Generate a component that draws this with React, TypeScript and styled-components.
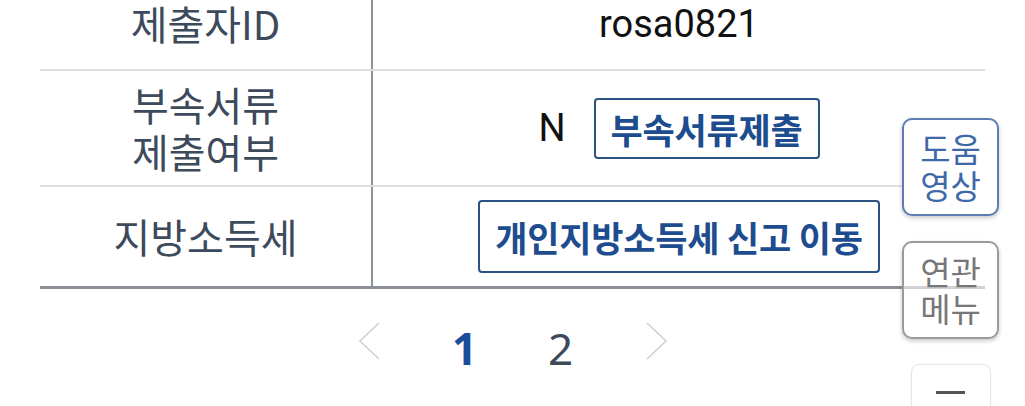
import React from "react";
import styled, { createGlobalStyle } from "styled-components";

const Global = createGlobalStyle`
  html, body { margin: 0; padding: 0; background: #ffffff; }
  body { overflow: hidden; font-family: "Noto Sans CJK KR", "Noto Sans", sans-serif; }
  *, *::before, *::after { box-sizing: border-box; }
`;

const Page = styled.div`
  position: relative;
  width: 1025px;
  height: 406px;
  overflow: hidden;
  background: #fff;
`;

const Table = styled.div`
  margin: -22px 40px 0 40px;
  border-bottom: 3px solid #8a8f96;
`;

const Row = styled.div<{ $h: number; $last?: boolean }>`
  display: grid;
  grid-template-columns: 331px 1fr;
  height: ${(p) => p.$h}px;
  border-bottom: ${(p) => (p.$last ? "none" : "2px solid #dedede")};
`;

const Label = styled.div`
  display: flex;
  align-items: center;
  justify-content: center;
  text-align: center;
  font-family: "Noto Sans CJK KR", "Noto Sans", sans-serif;
  font-size: 40px;
  line-height: 47px;
  color: #3d4a5c;
`;

const Value = styled.div`
  display: flex;
  align-items: center;
  justify-content: center;
  gap: 28px;
  border-left: 2px solid #8e9298;
  font-family: Roboto, "Noto Sans", sans-serif;
  font-size: 38px;
  color: #111;
`;

const OutlineButton = styled.button<{ $h: number }>`
  height: ${(p) => p.$h}px;
  padding: 0 15px;
  border: 2px solid #2b5283;
  border-radius: 4px;
  background: #fff;
  color: #1d4c8f;
  font-family: "Noto Sans CJK KR", "Noto Sans", sans-serif;
  font-weight: 700;
  font-size: 35px;
  letter-spacing: -0.2px;
  white-space: nowrap;
  cursor: pointer;
`;

const Pager = styled.div`
  height: 117px;
  display: flex;
  align-items: center;
  justify-content: center;
`;

const PageItem = styled.div<{ $active?: boolean }>`
  width: 96px;
  display: flex;
  justify-content: center;
  align-items: center;
  font-family: "Noto Sans", Roboto, sans-serif;
  font-size: 44px;
  font-weight: ${(p) => (p.$active ? 700 : 400)};
  color: ${(p) => (p.$active ? "#1a4c9a" : "#3d4a5c")};
`;

const Chevron = styled.svg`
  margin-top: -14px;
`;

const FloatStack = styled.div`
  position: absolute;
  top: 118px;
  right: 26px;
  display: flex;
  flex-direction: column;
  align-items: center;
  gap: 25px;
`;

const FloatButton = styled.div<{ $tone: "blue" | "gray" }>`
  width: 97px;
  height: 98px;
  border-radius: 10px;
  border: 2px solid ${(p) => (p.$tone === "blue" ? "#5b7db4" : "#9a9a9a")};
  background: ${(p) => (p.$tone === "blue" ? "#fff" : "rgba(255,255,255,0.6)")};
  box-shadow: 0 2px 4px rgba(0, 0, 0, 0.22);
  color: ${(p) => (p.$tone === "blue" ? "#3f68a8" : "#777")};
  font-family: "Noto Sans CJK KR", "Noto Sans", sans-serif;
  font-size: 33px;
  line-height: 37px;
  display: flex;
  align-items: center;
  justify-content: center;
  text-align: center;
`;

const TopButton = styled.div`
  width: 80px;
  height: 60px;
  border: 1px solid #e6e6e6;
  border-radius: 8px;
  background: #fff;
  box-shadow: 0 1px 3px rgba(0, 0, 0, 0.06);
  display: flex;
  flex-direction: column;
  align-items: center;
  padding-top: 26px;
`;

const TopBar = styled.div`
  width: 29px;
  height: 3px;
  background: #555;
`;

export default function App() {
  return (
    <Page>
      <Global />
      <Table>
        <Row $h={93}>
          <Label>제출자ID</Label>
          <Value>rosa0821</Value>
        </Row>
        <Row $h={116}>
          <Label>
            부속서류
            <br />
            제출여부
          </Label>
          <Value>
            <span>N</span>
            <OutlineButton $h={61}>부속서류제출</OutlineButton>
          </Value>
        </Row>
        <Row $h={99} $last>
          <Label>지방소득세</Label>
          <Value>
            <OutlineButton $h={73}>개인지방소득세 신고 이동</OutlineButton>
          </Value>
        </Row>
      </Table>
      <Pager>
        <PageItem>
          <Chevron width="24" height="40" viewBox="0 0 24 40">
            <polyline points="22,2 3,20 22,38" fill="none" stroke="#cfcfcf" strokeWidth="1.6" />
          </Chevron>
        </PageItem>
        <PageItem $active>1</PageItem>
        <PageItem>2</PageItem>
        <PageItem>
          <Chevron width="24" height="40" viewBox="0 0 24 40">
            <polyline points="2,2 21,20 2,38" fill="none" stroke="#cfcfcf" strokeWidth="1.6" />
          </Chevron>
        </PageItem>
      </Pager>
      <FloatStack>
        <FloatButton $tone="blue">
          도움
          <br />
          영상
        </FloatButton>
        <FloatButton $tone="gray">
          연관
          <br />
          메뉴
        </FloatButton>
        <TopButton>
          <TopBar />
        </TopButton>
      </FloatStack>
    </Page>
  );
}
